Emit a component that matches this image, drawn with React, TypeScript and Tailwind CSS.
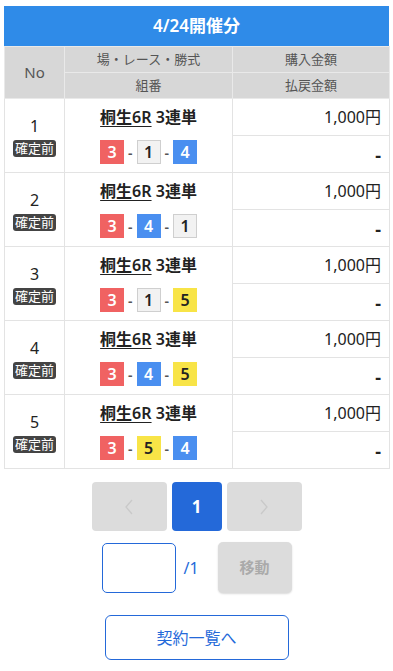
import React from "react";

type Num = 1 | 2 | 3 | 4 | 5 | 6;

const boxClass: Record<Num, string> = {
  1: "bg-[#f2f2f2] text-[#222] border border-[#cfcfcf]",
  2: "bg-[#222] text-white",
  3: "bg-[#f06262] text-white",
  4: "bg-[#4a8ff0] text-white",
  5: "bg-[#f8e447] text-[#222]",
  6: "bg-[#3cb371] text-white",
};

const rows: { no: number; combo: Num[] }[] = [
  { no: 1, combo: [3, 1, 4] },
  { no: 2, combo: [3, 4, 1] },
  { no: 3, combo: [3, 1, 5] },
  { no: 4, combo: [3, 4, 5] },
  { no: 5, combo: [3, 5, 4] },
];

function Box({ n }: { n: Num }) {
  return (
    <span
      className={`inline-flex w-[24px] h-[24px] items-center justify-center text-[16px] font-semibold leading-none box-border ${boxClass[n]}`}
    >
      {n}
    </span>
  );
}

export default function App() {
  return (
    <div
      className="w-[393px] bg-white pt-[6px] text-[#222]"
      style={{ fontFamily: '"Noto Sans", "Noto Sans CJK JP", sans-serif' }}
    >
      <div className="mx-[4px]">
        <div className="h-[40px] bg-[#2f8be8] flex items-center justify-center text-white font-semibold text-[17px]">
          4/24開催分
        </div>
        <table className="w-[385px] border-collapse table-fixed">
          <colgroup>
            <col className="w-[60px]" />
            <col className="w-[168px]" />
            <col className="w-[157px]" />
          </colgroup>
          <thead>
            <tr className="h-[26px] bg-[#d7d7d7] text-[13px] text-[#555]">
              <th rowSpan={2} className="font-normal border border-[#e9e9e9] text-[15px]">
                No
              </th>
              <th className="font-normal border border-[#e9e9e9]">場・レース・勝式</th>
              <th className="font-normal border border-[#e9e9e9]">購入金額</th>
            </tr>
            <tr className="h-[26px] bg-[#d7d7d7] text-[13px] text-[#555]">
              <th className="font-normal border border-[#e9e9e9]">組番</th>
              <th className="font-normal border border-[#e9e9e9]">払戻金額</th>
            </tr>
          </thead>
          <tbody>
            {rows.map((r) => (
              <React.Fragment key={r.no}>
                <tr className="h-[37px]">
                  <td rowSpan={2} className="border border-[#e3e3e3] text-center align-middle">
                    <div className="flex flex-col items-center">
                      <span className="text-[16px] leading-[22px]">{r.no}</span>
                      <span className="mt-[3px] bg-[#444] text-white text-[13px] leading-[17px] px-[2px] rounded-[3px]">
                        確定前
                      </span>
                    </div>
                  </td>
                  <td className="border-x border-t border-[#e3e3e3] text-center align-middle">
                    <span className="text-[16px] font-semibold leading-[22px]">
                      <span className="underline underline-offset-[3px] decoration-1">桐生6R</span>{" "}
                      3連単
                    </span>
                  </td>
                  <td className="border border-[#e3e3e3] text-right pr-[8px] text-[16px] align-middle leading-[22px]">
                    1,000円
                  </td>
                </tr>
                <tr className="h-[37px]">
                  <td className="border-x border-b border-[#e3e3e3] align-middle pb-[3px]">
                    <div className="flex items-center justify-center gap-[4px]">
                      <Box n={r.combo[0]} />
                      <span className="text-[14px] font-semibold text-[#555]">-</span>
                      <Box n={r.combo[1]} />
                      <span className="text-[14px] font-semibold text-[#555]">-</span>
                      <Box n={r.combo[2]} />
                    </div>
                  </td>
                  <td className="border border-[#e3e3e3] text-right pr-[8px] align-middle text-[18px] font-bold pt-[2px]">
                    -
                  </td>
                </tr>
              </React.Fragment>
            ))}
          </tbody>
        </table>
      </div>

      <div className="flex justify-center gap-[5px] mt-[13px]">
        <div className="w-[75px] h-[49px] rounded-[4px] bg-[#dcdcdc] flex items-center justify-center">
          <svg width="10" height="16" viewBox="0 0 10 16" fill="none">
            <path d="M8 1 L2 8 L8 15" stroke="#c9c9c9" strokeWidth="1.3" />
          </svg>
        </div>
        <div className="w-[50px] h-[49px] rounded-[4px] bg-[#2469d9] flex items-center justify-center text-white font-bold text-[17px]">
          1
        </div>
        <div className="w-[75px] h-[49px] rounded-[4px] bg-[#dcdcdc] flex items-center justify-center">
          <svg width="10" height="16" viewBox="0 0 10 16" fill="none">
            <path d="M2 1 L8 8 L2 15" stroke="#c9c9c9" strokeWidth="1.3" />
          </svg>
        </div>
      </div>

      <div className="flex justify-center items-center mt-[11px]">
        <div className="w-[74px] h-[50px] rounded-[5px] border border-[#2469d9] bg-white" />
        <span className="ml-[8px] w-[34px] text-[16px] text-[#2469d9]">/1</span>
        <div className="w-[74px] h-[51px] rounded-[5px] bg-[#dcdcdc] shadow-[0_1px_2px_rgba(0,0,0,0.15)] flex items-center justify-center text-[#aaa] font-semibold text-[15px]">
          移動
        </div>
      </div>

      <div className="flex justify-center mt-[22px] pb-[12px]">
        <div className="w-[184px] h-[45px] rounded-[6px] border border-[#2469d9] flex items-center justify-center text-[#2469d9] text-[16px]">
          契約一覧へ
        </div>
      </div>
    </div>
  );
}
